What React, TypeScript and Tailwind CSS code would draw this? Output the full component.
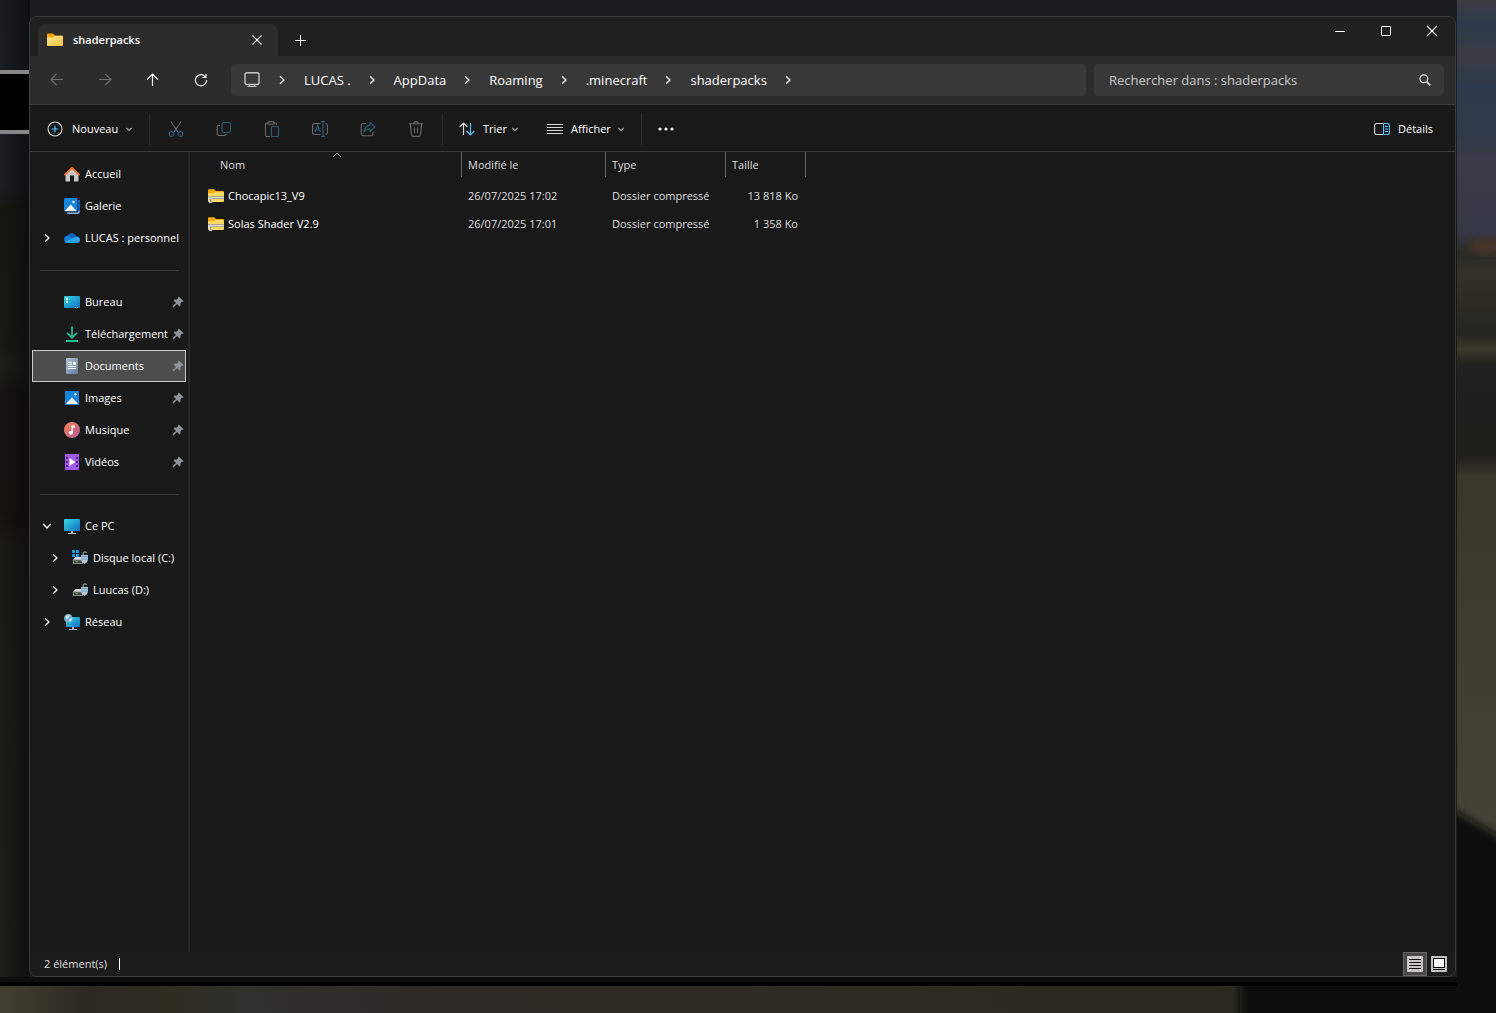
import type { ReactNode } from 'react'

interface IconProps {
  className?: string
}

interface PlaceItem {
  label: string
  icon: ReactNode
  chevron?: 'right' | 'down'
  pinned?: boolean
  selected?: boolean
  nested?: boolean
}

interface FileRow {
  name: string
  modified: string
  type: string
  size: string
}

/* Glyphs */

function Chevron({ className = '' }: IconProps) {
  return (
    <svg className={className} width="10" height="10" viewBox="0 0 10 10" fill="none" stroke="currentColor" strokeWidth="1.3">
      <path d="M3 1.2L7 5L3 8.8" />
    </svg>
  )
}

function SmallChevron() {
  return (
    <svg width="8" height="8" viewBox="0 0 8 8" fill="none" stroke="#a8a8a8" strokeWidth="1.1">
      <path d="M1.2 2.8L4 5.5L6.8 2.8" />
    </svg>
  )
}

function CloseIcon({ className = '' }: IconProps) {
  return (
    <svg className={className} width="12" height="12" viewBox="0 0 12 12" fill="none" stroke="currentColor" strokeWidth="1.1">
      <path d="M1 1L11 11M11 1L1 11" />
    </svg>
  )
}

function ArrowIcon({ className = '' }: IconProps) {
  return (
    <svg className={className} width="14" height="14" viewBox="0 0 14 14" fill="none" stroke="currentColor" strokeWidth="1.1">
      <path d="M13 6.5H1.2M6.5 1L1 6.5L6.5 12" />
    </svg>
  )
}

function UpIcon() {
  return (
    <svg width="14" height="14" viewBox="0 0 14 14" fill="none" stroke="currentColor" strokeWidth="1.2">
      <path d="M6.5 13V1.2M1 6.7L6.5 1.2L12 6.7" />
    </svg>
  )
}

function RefreshIcon() {
  return (
    <svg width="14" height="14" viewBox="0 0 14 14" fill="none" stroke="currentColor" strokeWidth="1.1">
      <path d="M11.6 4A5.6 5.6 0 1 0 12.6 7" />
      <path d="M8.5 4.5H12V1" />
    </svg>
  )
}

function MonitorIcon() {
  return (
    <svg width="16" height="16" viewBox="0 0 16 16" fill="none" stroke="#c8c8c8">
      <rect x="1" y="0.7" width="14" height="11.8" rx="2" strokeWidth="1.4" />
      <path d="M5.5 13V14.5M10.5 13V14.5M3.5 14.5H12.5" strokeWidth="1.2" />
    </svg>
  )
}

function SearchIcon() {
  return (
    <svg width="12" height="12" viewBox="0 0 12 12" fill="none" stroke="#e0e0e0" strokeWidth="1.2">
      <circle cx="4.8" cy="4.8" r="3.9" />
      <path d="M7.6 7.6L11.4 11.4" strokeWidth="1.5" />
    </svg>
  )
}

function NewIcon() {
  return (
    <svg width="16" height="16" viewBox="0 0 16 16" fill="none">
      <circle cx="8" cy="8" r="7" stroke="#d6d6d6" strokeWidth="1.1" />
      <path d="M8 4.8V11.2M4.8 8H11.2" stroke="#4cc2ff" strokeWidth="1.2" />
    </svg>
  )
}

function CutIcon() {
  return (
    <svg width="16" height="16" viewBox="0 0 16 16" fill="none" strokeWidth="1.1">
      <path d="M3 0.5L9.8 11M13 0.5L6.2 11" stroke="#6a6a6a" />
      <circle cx="3.6" cy="13" r="2.4" stroke="#28607d" />
      <circle cx="12.4" cy="13" r="2.4" stroke="#28607d" />
    </svg>
  )
}

function CopyIcon() {
  return (
    <svg width="16" height="16" viewBox="0 0 16 16" fill="none" strokeWidth="1.1">
      <path d="M4 4.5H3A1.8 1.8 0 0 0 1.2 6.3V12.7A1.8 1.8 0 0 0 3 14.5H8.2A1.8 1.8 0 0 0 10 12.9" stroke="#6a6a6a" />
      <rect x="6" y="1.5" width="8.5" height="10" rx="1.8" stroke="#28607d" />
    </svg>
  )
}

function PasteIcon() {
  return (
    <svg width="16" height="16" viewBox="0 0 16 16" fill="none" strokeWidth="1.1">
      <path d="M6 15.5H3A1.5 1.5 0 0 1 1.5 14V3.5A1.5 1.5 0 0 1 3 2H4M10 2H11A1.5 1.5 0 0 1 12.5 3.5V4" stroke="#6a6a6a" />
      <rect x="4" y="0.6" width="6" height="2.6" rx="1" stroke="#6a6a6a" />
      <rect x="7.5" y="5.5" width="7" height="10" rx="1.2" stroke="#28607d" />
    </svg>
  )
}

function RenameIcon() {
  return (
    <svg width="16" height="16" viewBox="0 0 16 16" fill="none" strokeWidth="1.1">
      <path d="M8.5 2.5H2.5A2 2 0 0 0 0.6 4.5V11.5A2 2 0 0 0 2.5 13.5H8.5M13.5 2.5A2 2 0 0 1 15.4 4.5V11.5A2 2 0 0 1 13.5 13.5" stroke="#6a6a6a" />
      <path d="M3 11L5.7 4.5L8.4 11M4 9H7.4M11 0.8V15.2M9 0.6H13M9 15.4H13" stroke="#28607d" />
    </svg>
  )
}

function ShareIcon() {
  return (
    <svg width="16" height="16" viewBox="0 0 16 16" fill="none" strokeWidth="1.1">
      <path d="M6 2.5H3.2A2 2 0 0 0 1.2 4.5V12.8A2 2 0 0 0 3.2 14.7H11A2 2 0 0 0 13 12.8V11" stroke="#6a6a6a" />
      <path d="M10 1.5L15 6L10 10.5V8C7.2 7.9 5.2 9 4 11.2C4.2 7 6.4 4.5 10 4.1Z" stroke="#28607d" strokeLinejoin="round" />
    </svg>
  )
}

function TrashIcon() {
  return (
    <svg width="16" height="16" viewBox="0 0 16 16" fill="none" stroke="#6a6a6a" strokeWidth="1.1">
      <path d="M1 2.8H15M5.8 2.6A2.2 2 0 0 1 10.2 2.6M2.3 3L3.5 14A1.6 1.6 0 0 0 5 15.4H11A1.6 1.6 0 0 0 12.5 14L13.7 3M6.5 6.5V11.8M9.5 6.5V11.8" />
    </svg>
  )
}

function SortIcon() {
  return (
    <svg width="16" height="16" viewBox="0 0 16 16" fill="none" strokeWidth="1.2">
      <path d="M4.5 14V2.4M0.6 6.2L4.5 2.2L8.4 6.2" stroke="#d6d6d6" />
      <path d="M11.5 2V13.6M7.6 9.8L11.5 13.8L15.4 9.8" stroke="#4cc2ff" />
    </svg>
  )
}

function ViewIcon() {
  return (
    <svg width="16" height="16" viewBox="0 0 16 16" fill="none" stroke="#d8d8d8">
      <path d="M0 3.5H16M0 6.5H16M0 9.5H16M0 12.5H16" />
    </svg>
  )
}

function DetailsIcon() {
  return (
    <svg width="16" height="14" viewBox="0 0 16 14" fill="none" strokeWidth="1.1">
      <path d="M9 1.5H2.5A2 2 0 0 0 0.6 3.4V10.6A2 2 0 0 0 2.5 12.5H9" stroke="#d6d6d6" />
      <path d="M9.5 1.5H13.5A2 2 0 0 1 15.4 3.4V10.6A2 2 0 0 1 13.5 12.5H9.5ZM11 4.5H14M11 7H14M11 9.5H14" stroke="#4cc2ff" />
    </svg>
  )
}

function PinIcon() {
  return (
    <svg className="shrink-0" width="12" height="12" viewBox="0 0 12 12" fill="#8b949c">
      <path d="M6.8 0.4L11.6 5.2C11 6 10.4 6 9.8 5.8L8.4 7.3C8.7 8.6 8.4 9.8 7.5 10.6L5 8L1.4 11.6L0.4 10.6L4 7L1.5 4.5C2.4 3.6 3.5 3.4 4.7 3.7L6.2 2.3C6 1.6 6.1 1 6.8 0.4Z" />
    </svg>
  )
}

/* Coloured icons */

function FolderIcon() {
  return (
    <svg width="16" height="14" viewBox="0 0 16 14">
      <defs>
        <linearGradient id="folder" x1="0" y1="0" x2="1" y2="1">
          <stop offset="0" stopColor="#ffe694" />
          <stop offset="1" stopColor="#fcc537" />
        </linearGradient>
      </defs>
      <path d="M0 1.4Q0 0.4 1 0.4H6L8 2.4H15Q16 2.4 16 3.4V8H0Z" fill="#f5a800" />
      <path d="M0 4.4H5.8L7.6 3H15Q16 3 16 4V12Q16 13 15 13H1Q0 13 0 12Z" fill="url(#folder)" />
    </svg>
  )
}

function ZipIcon() {
  return (
    <svg className="shrink-0" width="16" height="14" viewBox="0 0 16 14">
      <path d="M0 1.4Q0 0.2 1 0.2H6L8 2H15Q16 2 16 3V8H0Z" fill="#f7ac0c" />
      <path d="M0 4.2H6L7.6 3H15Q16 3 16 4V12Q16 13 15 13H1Q0 13 0 12Z" fill="#ffd965" />
      <rect x="0" y="7" width="16" height="3" fill="#e8e2cd" />
      <path d="M0.5 7.5H16M1.5 9.5H16" stroke="#656155" strokeDasharray="1 1" />
      <rect x="1" y="7.5" width="3.4" height="6.5" rx="1" fill="#c9c9c9" />
      <rect x="2.2" y="10.5" width="1" height="1.8" fill="#6a6a6a" />
    </svg>
  )
}

function HomeIcon() {
  return (
    <svg width="16" height="16" viewBox="0 0 16 16">
      <path d="M1.5 7L8 1.8L14.5 7V14.5Q14.5 15.5 13.5 15.5H10V9.5H6V15.5H2.5Q1.5 15.5 1.5 14.5Z" fill="#c9c9c9" />
      <path d="M0.9 8.6L8 1.7L15.1 8.6" fill="none" stroke="#e76a21" strokeWidth="1.9" strokeLinecap="round" strokeLinejoin="round" />
    </svg>
  )
}

function GalleryIcon() {
  return (
    <svg width="16" height="16" viewBox="0 0 16 16">
      <path d="M15 2Q16 2 16 3V13Q16 16 13 16H4Q3 16 3 14.5H14Z" fill="#8db8ea" />
      <path d="M14 2H15Q16 2.2 16 3V13.5H14Z" fill="#0f5cb0" />
      <rect width="13.5" height="13.5" rx="1.4" fill="#1586dc" />
      <path d="M0.8 13L6.7 6.5L12.6 13Z" fill="#fff" />
      <circle cx="9.5" cy="4" r="1.2" fill="#fff" />
    </svg>
  )
}

function CloudIcon() {
  return (
    <svg width="16" height="12" viewBox="0 0 16 12">
      <path d="M1 9C-1 5 2 3.5 3.5 3.7C5 0 10.5 -0.2 12 4C15 4 16.5 6 15.8 9Z" fill="#0a5fb6" />
      <path d="M0.3 8.5C0 5 2.2 3.6 4.4 3.8L12 9L3 11Q0.8 11 0.3 8.5Z" fill="#1281dd" />
      <path d="M1 10L10.5 5C14 4 16.4 6.2 16 8.6Q15.5 11 13 11H3.5Q1.8 11 1 10Z" fill="#2ba3ee" />
    </svg>
  )
}

function DesktopIcon() {
  return (
    <svg width="16" height="16" viewBox="0 0 16 16">
      <defs>
        <linearGradient id="screen" x1="0" y1="0" x2="1" y2="1">
          <stop offset="0" stopColor="#36d7e0" />
          <stop offset="1" stopColor="#0c6fc4" />
        </linearGradient>
      </defs>
      <rect y="2" width="16" height="12" rx="1" fill="url(#screen)" />
      <path d="M2 4h2v2h-2zM2 7h2v2h-2z" fill="#fff" />
      <path d="M11 13.5h1M13 13.5h1" stroke="#fff" />
    </svg>
  )
}

function DownloadIcon() {
  return (
    <svg width="16" height="16" viewBox="0 0 16 16" fill="none" stroke="#1fbf8f" strokeWidth="1.8">
      <path d="M8 0.5V11.5M3 6.8L8 11.7L13 6.8M2 15H14" />
    </svg>
  )
}

function DocumentIcon() {
  return (
    <svg width="16" height="16" viewBox="0 0 16 16">
      <defs>
        <linearGradient id="doc" x1="0" y1="0" x2="1" y2="1">
          <stop offset="0" stopColor="#b6c6d9" />
          <stop offset="1" stopColor="#5f7d9f" />
        </linearGradient>
      </defs>
      <rect x="2" width="12" height="16" rx="1" fill="url(#doc)" />
      <path d="M4 4.5H8M4 6.5H8M4 8.5H12M4 10.5H12" stroke="#fff" />
      <rect x="9" y="4" width="3" height="3" fill="#fff" />
    </svg>
  )
}

function PictureIcon() {
  return (
    <svg width="16" height="16" viewBox="0 0 16 16">
      <rect x="1" y="1" width="14" height="14" rx="1" fill="#1484da" />
      <path d="M1.8 14L8 7.5L14.2 14Z" fill="#fff" />
      <circle cx="11.5" cy="4.3" r="1.2" fill="#fff" />
    </svg>
  )
}

function MusicIcon() {
  return (
    <svg width="16" height="16" viewBox="0 0 16 16">
      <defs>
        <linearGradient id="music" x1="0" y1="0" x2="1" y2="1">
          <stop offset="0" stopColor="#f28a4e" />
          <stop offset="1" stopColor="#b4579c" />
        </linearGradient>
      </defs>
      <circle cx="8" cy="8" r="8" fill="url(#music)" />
      <path d="M7.5 3.2L11 3.8V5.8L8.8 5.4V11A2 1.8 0 1 1 7.5 9.3Z" fill="#fff" />
    </svg>
  )
}

function VideoIcon() {
  return (
    <svg width="16" height="16" viewBox="0 0 16 16">
      <rect x="1" width="14" height="16" rx="1" fill="#a25bea" />
      <path d="M3 3V15M13 3V15" stroke="#4a1d8c" strokeWidth="2" strokeDasharray="2 2" />
      <path d="M5.5 4L11.5 8L5.5 12Z" fill="#fff" />
    </svg>
  )
}

function PcIcon() {
  return (
    <svg width="16" height="16" viewBox="0 0 16 16">
      <rect y="1" width="16" height="12" rx="1" fill="url(#screen)" />
      <path d="M7 13H9V15H12V16H4V15H7Z" fill="#a9b5c0" />
    </svg>
  )
}

function DriveIcon({ system = false }: { system?: boolean }) {
  return (
    <svg width="16" height="16" viewBox="0 0 16 16">
      <path d="M3.5 7H12L15 10H1Z" fill="#e0e0e0" />
      <rect x="1" y="9.5" width="10" height="4.5" rx="0.6" fill="#8b8b8b" />
      <rect x="2" y="10.5" width="8" height="2.5" fill="#444" />
      <path d="M4 11h1.4v1.2h-1.4z" fill="#3bd23b" />
      {system && <path d="M0 0h3v3h-3zM4 0h3v3h-3zM0 4h3v3h-3zM4 4h3v3h-3z" fill="#149be8" />}
      <path d="M11.2 6V3A1.8 1.8 0 0 1 14.6 3" fill="none" stroke="#9aa0a5" strokeWidth="1.2" />
      <path d="M9 5H16V10Q16 12 12.5 14Q9 12 9 10Z" fill="#b7c3cd" />
      <path d="M9 6.5H16M9 9H16" stroke="#5da4da" />
    </svg>
  )
}

function NetworkIcon() {
  return (
    <svg width="16" height="16" viewBox="0 0 16 16">
      <rect x="2" y="3" width="14" height="10" rx="1" fill="url(#screen)" />
      <path d="M8 13H10V15H13V16H5V15H8Z" fill="#a9b5c0" />
      <circle cx="4.3" cy="4.3" r="4.3" fill="#6fb0d2" />
      <path d="M1.5 2.5Q4 0 6 1L4.5 4L2 5ZM5 5L8 4Q8 7 5.5 8Z" fill="#cfe4ee" />
    </svg>
  )
}

/* Data */

const crumbs = ['LUCAS .', 'AppData', 'Roaming', '.minecraft', 'shaderpacks']

const places: PlaceItem[][] = [
  [
    { label: 'Accueil', icon: <HomeIcon /> },
    { label: 'Galerie', icon: <GalleryIcon /> },
    { label: 'LUCAS : personnel', icon: <CloudIcon />, chevron: 'right' },
  ],
  [
    { label: 'Bureau', icon: <DesktopIcon />, pinned: true },
    { label: 'Téléchargement', icon: <DownloadIcon />, pinned: true },
    { label: 'Documents', icon: <DocumentIcon />, pinned: true, selected: true },
    { label: 'Images', icon: <PictureIcon />, pinned: true },
    { label: 'Musique', icon: <MusicIcon />, pinned: true },
    { label: 'Vidéos', icon: <VideoIcon />, pinned: true },
  ],
  [
    { label: 'Ce PC', icon: <PcIcon />, chevron: 'down' },
    { label: 'Disque local (C:)', icon: <DriveIcon system />, chevron: 'right', nested: true },
    { label: 'Luucas (D:)', icon: <DriveIcon />, chevron: 'right', nested: true },
    { label: 'Réseau', icon: <NetworkIcon />, chevron: 'right' },
  ],
]

const files: FileRow[] = [
  { name: 'Chocapic13_V9', modified: '26/07/2025 17:02', type: 'Dossier compressé', size: '13 818 Ko' },
  { name: 'Solas Shader V2.9', modified: '26/07/2025 17:01', type: 'Dossier compressé', size: '1 358 Ko' },
]

const editActions = [
  { label: 'Couper', icon: <CutIcon /> },
  { label: 'Copier', icon: <CopyIcon /> },
  { label: 'Coller', icon: <PasteIcon /> },
  { label: 'Renommer', icon: <RenameIcon /> },
  { label: 'Partager', icon: <ShareIcon /> },
  { label: 'Supprimer', icon: <TrashIcon /> },
]

/* Sections */

function TitleBar() {
  return (
    <header className="flex h-[39px] justify-between bg-[#202020]">
      <div className="flex items-end pl-2">
        <div className="flex h-8 w-60 items-center rounded-t-lg bg-[#2c2c2c] pr-4 pl-[9px]">
          <FolderIcon />
          <span className="ml-[10px] flex-1 font-semibold">shaderpacks</span>
          <button aria-label="Fermer l'onglet">
            <svg width="10" height="10" viewBox="0 0 10 10" fill="none" stroke="currentColor" strokeWidth="1.1">
              <path d="M0.5 0.5L9.5 9.5M9.5 0.5L0.5 9.5" />
            </svg>
          </button>
        </div>
        <button className="flex h-8 w-[46px] items-center justify-center" aria-label="Nouvel onglet">
          <svg width="12" height="12" viewBox="0 0 12 12" stroke="currentColor">
            <path d="M5.5 1V12M0 6.5H11" />
          </svg>
        </button>
      </div>
      <div className="flex h-7">
        <button className="flex w-[46px] items-center justify-center" aria-label="Réduire">
          <svg width="10" height="10" viewBox="0 0 10 10" stroke="#fff">
            <path d="M0 5.5H10" />
          </svg>
        </button>
        <button className="flex w-[46px] items-center justify-center" aria-label="Agrandir">
          <svg width="10" height="10" viewBox="0 0 10 10" fill="none" stroke="#fff">
            <rect x="0.5" y="0.5" width="9" height="9" rx="0.5" />
          </svg>
        </button>
        <button className="flex w-[46px] items-center justify-center" aria-label="Fermer">
          <CloseIcon />
        </button>
      </div>
    </header>
  )
}

function AddressBar() {
  return (
    <div className="flex h-12 items-center bg-[#2c2c2c] pr-[11px] pl-[3px]">
      <button className="flex h-8 w-12 items-center justify-center text-[#6f6f6f]" aria-label="Précédent">
        <ArrowIcon />
      </button>
      <button className="flex h-8 w-12 items-center justify-center text-[#6f6f6f]" aria-label="Suivant">
        <ArrowIcon className="-scale-x-100" />
      </button>
      <button className="flex h-8 w-12 items-center justify-center" aria-label="Dossier parent">
        <UpIcon />
      </button>
      <button className="flex h-8 w-12 items-center justify-center" aria-label="Actualiser">
        <RefreshIcon />
      </button>
      <nav className="ml-[6px] flex h-8 flex-1 items-center rounded bg-[#383838] pl-[13px] text-[13px]" aria-label="Chemin">
        <MonitorIcon />
        <Chevron className="ml-[17px]" />
        {crumbs.map((crumb) => (
          <div key={crumb} className="flex items-center">
            <a href="#" className="pr-4 pl-[17px]">
              {crumb}
            </a>
            <Chevron />
          </div>
        ))}
      </nav>
      <label className="ml-2 flex h-8 w-[350px] items-center rounded bg-[#383838] pr-[13px] pl-[15px]">
        <input
          type="text"
          aria-label="Rechercher"
          placeholder="Rechercher dans : shaderpacks"
          className="min-w-0 flex-1 bg-transparent text-[13px] outline-none placeholder:text-[#c8c8c8]"
        />
        <SearchIcon />
      </label>
    </div>
  )
}

function CommandBar() {
  return (
    <div className="flex h-12 items-center border-y border-[#3b3b3b] bg-[#191919] pt-[2px]">
      <button className="flex w-[119px] items-center pl-[17px]">
        <NewIcon />
        <span className="ml-[9px] flex-1 text-left">Nouveau</span>
        <span className="mr-4">
          <SmallChevron />
        </span>
      </button>
      <div className="h-8 w-px bg-[#2f2f2f]" />
      <div className="flex px-[2px]">
        {editActions.map((action) => (
          <button key={action.label} className="flex h-8 w-12 items-center justify-center" aria-label={action.label} disabled>
            {action.icon}
          </button>
        ))}
      </div>
      <div className="h-8 w-px bg-[#2f2f2f]" />
      <button className="flex w-[92px] items-center pl-4">
        <SortIcon />
        <span className="ml-2 flex-1 text-left">Trier</span>
        <span className="mr-4">
          <SmallChevron />
        </span>
      </button>
      <button className="flex w-[106px] items-center pl-3">
        <ViewIcon />
        <span className="ml-2 flex-1 text-left">Afficher</span>
        <span className="mr-4">
          <SmallChevron />
        </span>
      </button>
      <div className="h-8 w-px bg-[#2f2f2f]" />
      <button className="flex h-8 w-12 items-center justify-center" aria-label="Voir plus">
        <svg width="16" height="4" viewBox="0 0 16 4" fill="currentColor">
          <circle cx="2" cy="2" r="1.6" />
          <circle cx="8" cy="2" r="1.6" />
          <circle cx="14" cy="2" r="1.6" />
        </svg>
      </button>
      <button className="mr-[22px] ml-auto flex items-center gap-2">
        <DetailsIcon />
        Détails
      </button>
    </div>
  )
}

function Place({ item }: { item: PlaceItem }) {
  return (
    <a
      href="#"
      className={
        item.selected
          ? 'flex h-8 items-center border border-[#c8c8c8] bg-[#4d4d4d] pr-px'
          : 'flex h-8 items-center border border-transparent pr-px'
      }
    >
      <span className={item.nested ? 'flex w-[39px] shrink-0 justify-end pr-3' : 'flex w-[31px] shrink-0 justify-end pr-3'}>
        {item.chevron && <Chevron className={item.chevron === 'down' ? 'rotate-90' : ''} />}
      </span>
      <span className="shrink-0">{item.icon}</span>
      <span className="ml-[5px] min-w-0 flex-1 whitespace-nowrap">{item.label}</span>
      {item.pinned && <PinIcon />}
    </a>
  )
}

function Sidebar() {
  return (
    <nav className="w-40 shrink-0 border-r-2 border-[#292929] px-[2px] pt-[6px]" aria-label="Emplacements">
      {places.map((group, index) => (
        <div key={group[0].label}>
          {index > 0 && (
            <div className="flex h-8 items-center pr-[7px] pl-2">
              <div className="h-px w-full bg-[#3b3b3b]" />
            </div>
          )}
          {group.map((item) => (
            <Place key={item.label} item={item} />
          ))}
        </div>
      ))}
    </nav>
  )
}

function FileList() {
  return (
    <main className="flex-1">
      <table className="w-[616px] table-fixed text-left">
        <colgroup>
          <col className="w-[272px]" />
          <col className="w-36" />
          <col className="w-[120px]" />
          <col className="w-20" />
        </colgroup>
        <thead className="text-[#dedede]">
          <tr className="h-[30px] align-top">
            <th className="relative p-0 font-normal" aria-sort="ascending">
              <div className="h-[25px] border-r border-[#636363] pl-[30px] leading-[25px]">Nom</div>
              <svg className="absolute top-0 left-[142px]" width="10" height="6" viewBox="0 0 10 6" fill="none" stroke="#a0a0a0">
                <path d="M1 5L5 1.2L9 5" />
              </svg>
            </th>
            <th className="p-0 font-normal">
              <div className="h-[25px] border-r border-[#636363] pl-[6px] leading-[25px]">Modifié le</div>
            </th>
            <th className="p-0 font-normal">
              <div className="h-[25px] border-r border-[#636363] pl-[6px] leading-[25px]">Type</div>
            </th>
            <th className="p-0 font-normal">
              <div className="h-[25px] border-r border-[#636363] pl-[6px] leading-[25px]">Taille</div>
            </th>
          </tr>
        </thead>
        <tbody className="text-[#dedede]">
          {files.map((file) => (
            <tr key={file.name} className="h-7">
              <td className="p-0">
                <div className="flex items-center gap-1 pl-[18px] text-white">
                  <ZipIcon />
                  {file.name}
                </div>
              </td>
              <td className="p-0 pl-[6px]">{file.modified}</td>
              <td className="p-0 pl-[6px]">{file.type}</td>
              <td className="p-0 pr-2 text-right">{file.size}</td>
            </tr>
          ))}
        </tbody>
      </table>
    </main>
  )
}

function StatusBar() {
  return (
    <footer className="flex h-6 items-center bg-[#1c1c1c] pl-[14px] text-[#dedede]">
      <span>2 élément(s)</span>
      <div className="ml-3 h-3 w-px bg-white" />
      <div className="mr-1 ml-auto flex">
        <button className="flex size-6 items-center justify-center border border-[#686868] bg-[#484848]" aria-label="Détails" aria-pressed="true">
          <svg width="16" height="16" viewBox="0 0 16 16">
            <rect width="16" height="16" rx="1" fill="#c9c4c6" />
            <path d="M2 3.5H14M2 6.5H14M2 9.5H14M2 12.5H14" stroke="#111" />
          </svg>
        </button>
        <button className="flex size-6 items-center justify-center" aria-label="Grandes icônes">
          <svg width="16" height="16" viewBox="0 0 16 16">
            <rect width="16" height="16" rx="1" fill="#c4c4c4" />
            <rect x="2.5" y="2.5" width="11" height="9" fill="#fff" stroke="#000" />
            <path d="M2 13.5H14" stroke="#000" />
          </svg>
        </button>
      </div>
    </footer>
  )
}

/* Blurred landscape seen around the window */
function Scenery() {
  return (
    <svg className="absolute inset-0 size-full" viewBox="0 0 1496 1013" preserveAspectRatio="none" aria-hidden="true">
      <defs>
        <linearGradient id="sky" x1="0" y1="0" x2="0" y2="1">
          <stop offset="0" stopColor="#3b3d42" />
          <stop offset="0.025" stopColor="#2d3a4b" />
          <stop offset="0.055" stopColor="#3a3c43" />
          <stop offset="0.085" stopColor="#2d3a4b" />
          <stop offset="0.13" stopColor="#303a4a" />
          <stop offset="0.16" stopColor="#3a3b46" />
          <stop offset="0.23" stopColor="#343845" />
          <stop offset="0.25" stopColor="#292a25" />
          <stop offset="0.27" stopColor="#313128" />
          <stop offset="0.33" stopColor="#252520" />
          <stop offset="0.345" stopColor="#3b3a2c" />
          <stop offset="0.36" stopColor="#20201c" />
          <stop offset="0.45" stopColor="#20201b" />
          <stop offset="0.47" stopColor="#38362b" />
          <stop offset="0.6" stopColor="#3e3c2f" />
          <stop offset="0.82" stopColor="#444338" />
        </linearGradient>
        <linearGradient id="dusk" x1="0" y1="0" x2="0" y2="1">
          <stop offset="0" stopColor="#191c20" />
          <stop offset="0.19" stopColor="#1a1d21" />
          <stop offset="0.21" stopColor="#171712" />
          <stop offset="0.35" stopColor="#191914" />
          <stop offset="0.37" stopColor="#1d1e17" />
          <stop offset="0.4" stopColor="#151410" />
          <stop offset="0.52" stopColor="#17130f" />
          <stop offset="0.56" stopColor="#1b1b15" />
          <stop offset="1" stopColor="#1d1e18" />
        </linearGradient>
        <linearGradient id="ground" x1="0" y1="0" x2="1" y2="0">
          <stop offset="0" stopColor="#413f30" />
          <stop offset="0.06" stopColor="#2c2923" />
          <stop offset="0.12" stopColor="#2d2d22" />
          <stop offset="0.17" stopColor="#30302d" />
          <stop offset="0.3" stopColor="#2d2a25" />
          <stop offset="0.6" stopColor="#2c2b22" />
          <stop offset="1" stopColor="#28281f" />
        </linearGradient>
        <linearGradient id="shade" x1="0" y1="0" x2="1" y2="0">
          <stop offset="0" stopColor="#000" stopOpacity="0" />
          <stop offset="1" stopColor="#000" stopOpacity="0.45" />
        </linearGradient>
        <filter id="soft" x="-10%" y="-10%" width="120%" height="120%">
          <feGaussianBlur stdDeviation="4" />
        </filter>
      </defs>
      <rect x="1457" width="39" height="1013" fill="url(#sky)" />
      <ellipse cx="1486" cy="246" rx="17" ry="9" fill="#46352a" filter="url(#soft)" />
      <rect y="986" width="1457" height="27" fill="url(#ground)" />
      <path d="M1240 1040V970L1440 960V802L1520 848V1040Z" fill="#090909" filter="url(#soft)" />
      <rect width="1457" height="986" fill="url(#dusk)" />
      <rect width="30" height="986" fill="url(#shade)" />
      <rect y="977" width="1457" height="5" fill="#0d0d0c" />
      <rect y="982" width="1457" height="4" fill="#000" />
      <rect y="70" width="30" height="64" fill="#868686" />
      <rect y="74" width="30" height="56" fill="#000" />
    </svg>
  )
}

export default function App() {
  return (
    <div className="relative flex min-h-screen flex-col bg-[#0a0a0a] pt-4 pr-10 pb-9 pl-[29px] font-['Open_Sans','Noto_Sans',sans-serif] text-[11px] leading-4 text-white">
      <Scenery />
      <div className="relative flex flex-1 flex-col overflow-hidden rounded-lg border border-[#3b3b3b] bg-[#191919]">
        <TitleBar />
        <AddressBar />
        <CommandBar />
        <div className="flex flex-1">
          <Sidebar />
          <FileList />
        </div>
        <StatusBar />
      </div>
    </div>
  )
}
